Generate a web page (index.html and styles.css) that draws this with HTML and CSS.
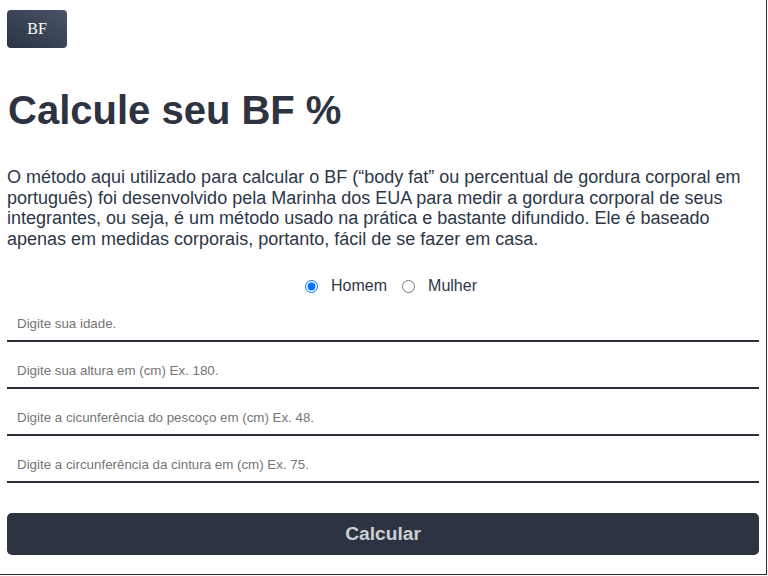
FILE: index.html
```html
<!DOCTYPE html>
<html lang="pt-BR">
<head>
<meta charset="utf-8">
<title>Calcule seu BF %</title>
<link rel="stylesheet" href="styles.css">
</head>
<body>
<div class="page">
  <header class="top">
    <a class="logo" href="#">BF</a>
  </header>
  <main class="main">
    <h1 class="title">Calcule seu BF %</h1>
    <p class="intro">O método aqui utilizado para calcular o BF (“body fat” ou percentual de gordura corporal em português) foi desenvolvido pela Marinha dos EUA para medir a gordura corporal de seus integrantes, ou seja, é um método usado na prática e bastante difundido. Ele é baseado apenas em medidas corporais, portanto, fácil de se fazer em casa.</p>
    <form class="form">
      <div class="sex">
        <label class="opt"><input type="radio" name="sexo" checked><span>Homem</span></label>
        <label class="opt"><input type="radio" name="sexo"><span>Mulher</span></label>
      </div>
      <input class="field" type="text" placeholder="Digite sua idade.">
      <input class="field" type="text" placeholder="Digite sua altura em (cm) Ex. 180.">
      <input class="field" type="text" placeholder="Digite a cicunferência do pescoço em (cm) Ex. 48.">
      <input class="field" type="text" placeholder="Digite a circunferência da cintura em (cm) Ex. 75.">
      <button class="submit" type="button">Calcular</button>
    </form>
  </main>
</div>
</body>
</html>
```

FILE: styles.css
```css
html, body {
  margin: 0;
  padding: 0;
  background: #ffffff;
}

.page {
  box-sizing: border-box;
  width: 767px;
  height: 575px;
  border-right: 1px solid #2a2d33;
  border-bottom: 1px solid #2a2d33;
  padding: 10px 7px 0 7px;
  font-family: "Liberation Sans", Arial, sans-serif;
  color: #2d3340;
  overflow: hidden;
}

.top {
  display: flex;
}

.logo {
  display: flex;
  align-items: center;
  justify-content: center;
  width: 60px;
  height: 38px;
  border-radius: 4px;
  background: linear-gradient(to top right, #2b3445, #4a5466);
  color: #ffffff;
  font-family: "Liberation Serif", "Times New Roman", serif;
  font-size: 16px;
  text-decoration: none;
}

.title {
  margin: 39px 0 0 1px;
  font-size: 40px;
  line-height: 46px;
  font-weight: bold;
  color: #2d3340;
}

.intro {
  margin: 34px 0 0 0;
  font-size: 18px;
  line-height: 20.7px;
  color: #2d3748;
}

.form {
  display: flex;
  flex-direction: column;
}

.sex {
  display: flex;
  justify-content: center;
  align-items: center;
  gap: 11px;
  margin-top: 27px;
  padding-left: 12px;
  height: 19px;
  font-size: 16px;
  color: #2d3748;
}

.opt {
  display: flex;
  align-items: center;
}

.opt input {
  width: 13px;
  height: 13px;
  margin: 0 13px 0 4px;
}

.field {
  box-sizing: border-box;
  display: block;
  width: 100%;
  height: 35px;
  margin: 12px 0 0 0;
  padding: 0 10px;
  border: none;
  border-bottom: 2px solid #2a2f3a;
  outline: none;
  font-family: "Liberation Sans", Arial, sans-serif;
  font-size: 13.333px;
  color: #2d3340;
  background: transparent;
}

.sex + .field {
  margin-top: 11px;
}

.field::placeholder {
  color: #757575;
}

.submit {
  display: block;
  width: 100%;
  height: 42px;
  margin-top: 30px;
  border: none;
  border-radius: 5px;
  background: #2d3340;
  color: #cbd0d6;
  font-family: "Liberation Sans", Arial, sans-serif;
  font-size: 19.2px;
  font-weight: bold;
  cursor: pointer;
}
```
